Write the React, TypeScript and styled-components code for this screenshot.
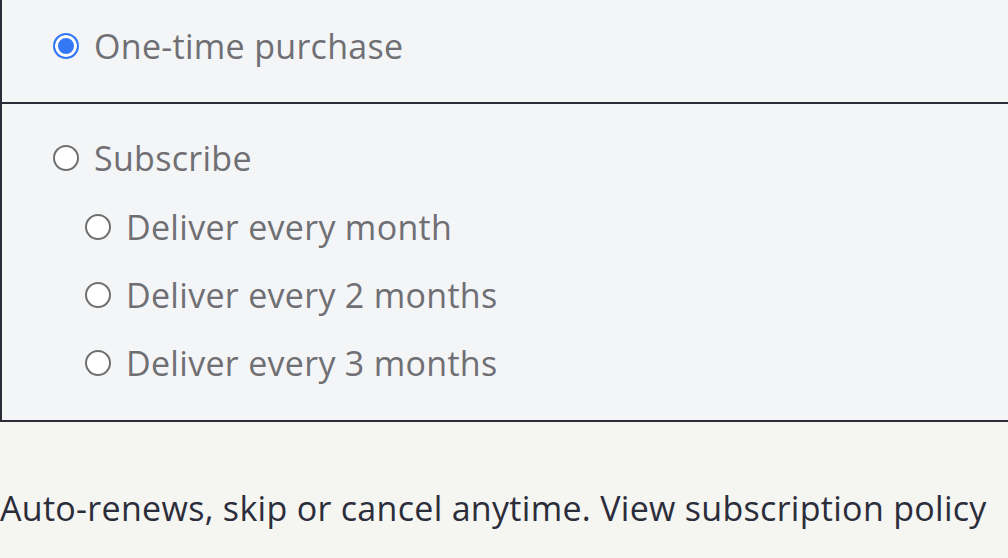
import * as React from 'react';
import styled, { createGlobalStyle } from 'styled-components';

const BORDER = '#2b2c38';

const GlobalStyle = createGlobalStyle`
    html, body {
        margin: 0;
        padding: 0;
        background: #f5f5f1;
    }
    body {
        font-family: "Open Sans", "Liberation Sans", sans-serif;
    }
`;

const Page = styled.div`
    width: 1008px;
    height: 558px;
    overflow: hidden;
    background: #f5f5f1;
`;

const Options = styled.div`
    background: #f4f5f7;
    border-left: 2px solid ${BORDER};
    border-bottom: 2px solid ${BORDER};
`;

const Section = styled.div<{ $top: number; $bottom: number; $divided?: boolean }>`
    display: flex;
    flex-direction: column;
    gap: 28px;
    padding: ${p => p.$top}px 0 ${p => p.$bottom}px;
    border-bottom: ${p => (p.$divided ? `2px solid ${BORDER}` : 'none')};
`;

const Option = styled.label<{ $nested?: boolean }>`
    display: flex;
    align-items: center;
    gap: 15px;
    height: 40px;
    padding-left: ${p => (p.$nested ? 83 : 51)}px;
    font-size: 34px;
    letter-spacing: 0.3px;
    color: #6f6f74;
    cursor: pointer;
`;

const Radio = styled.input`
    appearance: none;
    margin: 0;
    width: 26px;
    height: 26px;
    flex-shrink: 0;
    border-radius: 50%;
    border: 2px solid #6f6f6f;
    background: #fff;
    &:checked {
        border-color: #3478f6;
        background: #3478f6;
        box-shadow: inset 0 0 0 3px #fff;
    }
`;

const Note = styled.p`
    margin: 66px 0 0;
    font-size: 34px;
    letter-spacing: 0.3px;
    line-height: 40px;
    color: #2c2d3b;
    white-space: nowrap;
`;

type Plan = 'once' | 'subscribe';

const intervals = ['Deliver every month', 'Deliver every 2 months', 'Deliver every 3 months'];

const App: React.FC = () => {
    const [plan, setPlan] = React.useState<Plan>('once');
    const [interval, setInterval] = React.useState<string | null>(null);

    return (
        <Page>
            <GlobalStyle />
            <Options>
                <Section $top={26} $bottom={36} $divided>
                    <Option>
                        <Radio
                            type="radio"
                            name="plan"
                            checked={plan === 'once'}
                            onChange={() => setPlan('once')}
                        />
                        One-time purchase
                    </Option>
                </Section>
                <Section $top={34} $bottom={37}>
                    <Option style={{ marginBottom: 1 }}>
                        <Radio
                            type="radio"
                            name="plan"
                            checked={plan === 'subscribe'}
                            onChange={() => setPlan('subscribe')}
                        />
                        Subscribe
                    </Option>
                    {intervals.map(label => (
                        <Option $nested key={label}>
                            <Radio
                                type="radio"
                                name="interval"
                                checked={interval === label}
                                onChange={() => setInterval(label)}
                            />
                            {label}
                        </Option>
                    ))}
                </Section>
            </Options>
            <Note>Auto-renews, skip or cancel anytime. View subscription policy</Note>
        </Page>
    );
};

export default App;
